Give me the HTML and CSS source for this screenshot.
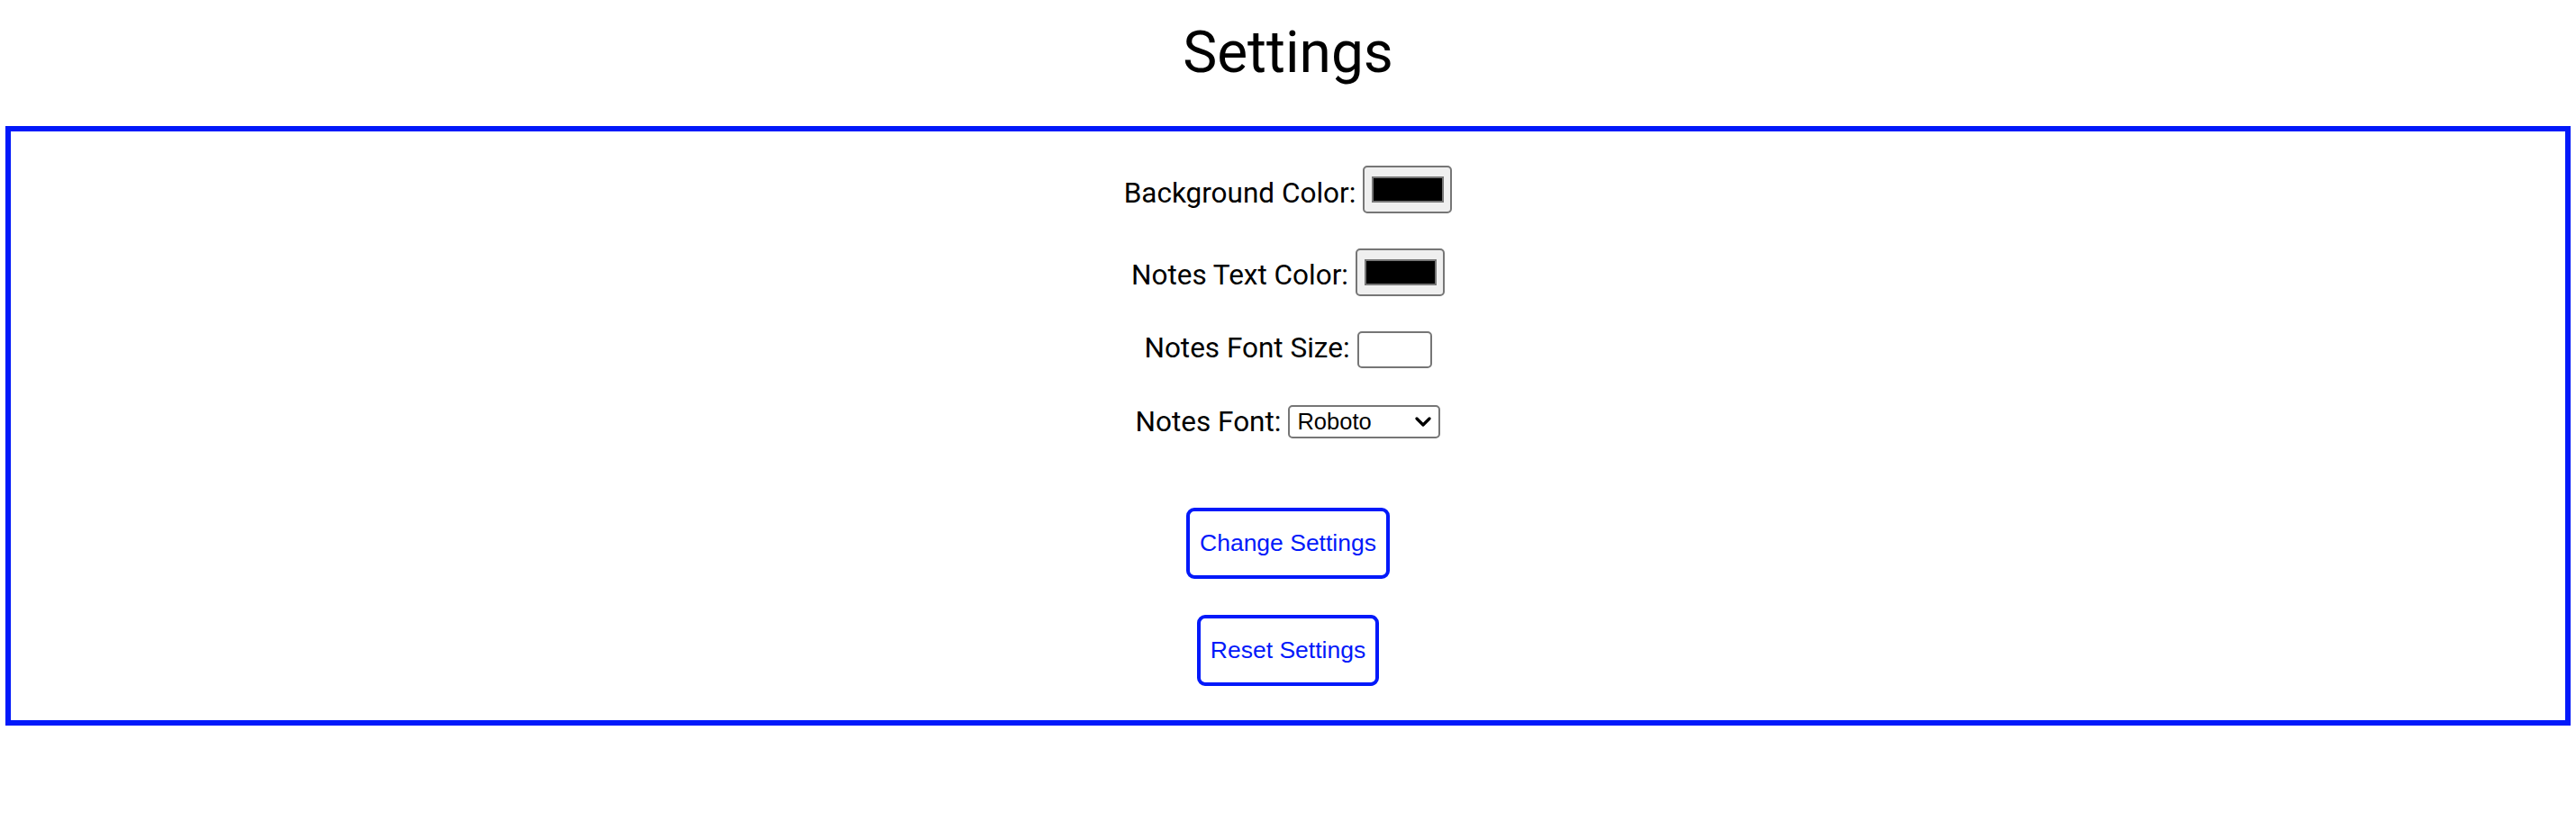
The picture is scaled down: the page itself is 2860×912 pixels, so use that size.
FILE: index.html
```html
<!DOCTYPE html>
<html lang="en">
<head>
<meta charset="utf-8">
<title>Settings</title>
<link rel="stylesheet" href="styles.css">
</head>
<body>
<h1 class="title">Settings</h1>
<div class="panel">
  <div class="fields">
    <div class="row">
      <label class="label label-color" for="bg">Background Color:</label>
      <input class="color-input" id="bg" type="color" value="#000000">
    </div>
    <div class="row">
      <label class="label label-color2" for="tc">Notes Text Color:</label>
      <input class="color-input" id="tc" type="color" value="#000000">
    </div>
    <div class="row">
      <label class="label" for="fs">Notes Font Size:</label>
      <input class="text-input" id="fs" type="text">
    </div>
    <div class="row row-font">
      <label class="label" for="ff">Notes Font:</label>
      <select class="select" id="ff">
        <option>Roboto</option>
        <option>Arial</option>
        <option>Times New Roman</option>
      </select>
    </div>
  </div>
  <div class="actions">
    <button class="btn" type="button">Change Settings</button>
    <button class="btn" type="button">Reset Settings</button>
  </div>
</div>
</body>
</html>
```

FILE: styles.css
```css
html, body {
  margin: 0;
  padding: 0;
  background: #ffffff;
}

body {
  font-family: Roboto, "Liberation Sans", Arial, sans-serif;
  color: #000000;
}

.title {
  margin: 19px 0 41px;
  height: 80px;
  line-height: 80px;
  font-size: 64px;
  font-weight: 400;
  text-align: center;
}

.panel {
  margin: 0 6px;
  border: 6px solid #0219fa;
  padding: 38px 0;
  display: flex;
  flex-direction: column;
  align-items: center;
}

.fields {
  display: flex;
  flex-direction: column;
  align-items: center;
  gap: 39px;
}

.row {
  display: flex;
  align-items: flex-start;
  gap: 8px;
}

.row-font {
  margin-top: 2px;
}

.label {
  font-size: 31.5px;
  line-height: 37px;
}

.label-color { margin-top: 12px; }
.label-color2 { margin-top: 11px; }

.color-input {
  box-sizing: border-box;
  width: 99px;
  height: 53px;
  margin: 0;
  padding: 10px 7px 10px 8px;
  border: 2px solid #767676;
  border-radius: 5px;
  background: #efefef;
  cursor: pointer;
}

.color-input::-webkit-color-swatch-wrapper {
  padding: 0;
}

.color-input::-webkit-color-swatch {
  border: 2px solid #777777;
  border-radius: 0;
}

.text-input {
  box-sizing: border-box;
  width: 83px;
  height: 41px;
  margin: 0;
  padding: 0 6px;
  border: 2px solid #767676;
  border-radius: 5px;
  background: #ffffff;
  font-family: "Liberation Sans", Arial, sans-serif;
  font-size: 24px;
}

.select {
  box-sizing: border-box;
  width: 169px;
  height: 37px;
  margin: 0;
  padding: 0 0 0 8px;
  border: 2px solid #767676;
  border-radius: 5px;
  background-color: #ffffff;
  background-image: url("data:image/svg+xml;utf8,<svg xmlns='http://www.w3.org/2000/svg' width='18' height='11' viewBox='0 0 18 11'><path d='M2 2 L9 9 L16 2' fill='none' stroke='black' stroke-width='3.2' stroke-linecap='round' stroke-linejoin='round'/></svg>");
  background-repeat: no-repeat;
  background-position: right 8px center;
  -webkit-appearance: none;
  appearance: none;
  font-family: "Liberation Sans", Arial, sans-serif;
  font-size: 25.5px;
  color: #000000;
  line-height: 33px;
}

.actions {
  margin-top: 77px;
  display: flex;
  flex-direction: column;
  align-items: center;
  gap: 40px;
}

.btn {
  margin: 0;
  padding: 20px 11px;
  border: 4px solid #0219fa;
  border-radius: 9px;
  background: #ffffff;
  color: #0219fa;
  font-family: "Liberation Sans", Arial, sans-serif;
  font-size: 26.5px;
  line-height: 31px;
  cursor: pointer;
}
```
